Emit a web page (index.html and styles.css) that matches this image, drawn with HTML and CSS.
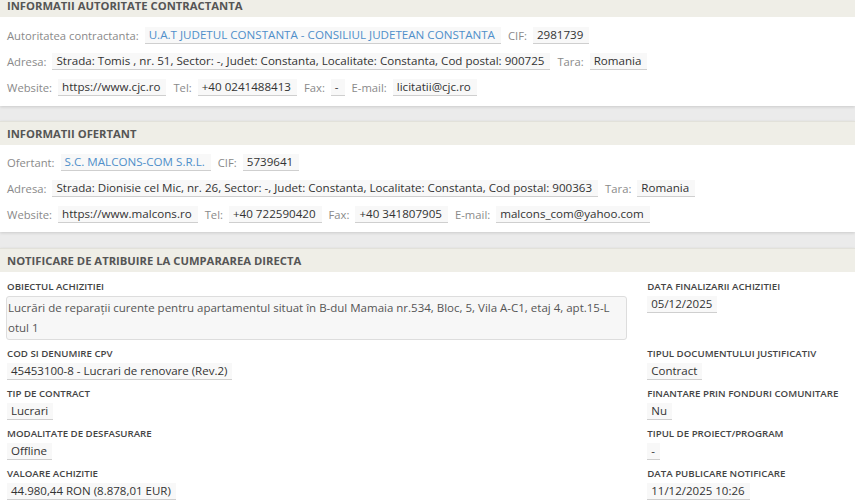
FILE: index.html
```html
<!DOCTYPE html>
<html lang="ro">
<head>
<meta charset="utf-8">
<title>Notificare de atribuire</title>
<link rel="stylesheet" href="styles.css">
</head>
<body>
<section class="panel first">
  <div class="panel-head">INFORMATII AUTORITATE CONTRACTANTA</div>
  <div class="panel-body">
    <div class="line"><span class="lbl">Autoritatea contractanta:</span><span class="val link">U.A.T JUDETUL CONSTANTA - CONSILIUL JUDETEAN CONSTANTA</span><span class="lbl">CIF:</span><span class="val">2981739</span></div>
    <div class="line"><span class="lbl">Adresa:</span><span class="val">Strada: Tomis , nr. 51, Sector: -, Judet: Constanta, Localitate: Constanta, Cod postal: 900725</span><span class="lbl">Tara:</span><span class="val">Romania</span></div>
    <div class="line"><span class="lbl">Website:</span><span class="val">https://www.cjc.ro</span><span class="lbl">Tel:</span><span class="val">+40 0241488413</span><span class="lbl">Fax:</span><span class="val">-</span><span class="lbl">E-mail:</span><span class="val">licitatii@cjc.ro</span></div>
  </div>
</section>
<section class="panel second">
  <div class="panel-head">INFORMATII OFERTANT</div>
  <div class="panel-body">
    <div class="line"><span class="lbl">Ofertant:</span><span class="val link">S.C. MALCONS-COM S.R.L.</span><span class="lbl">CIF:</span><span class="val">5739641</span></div>
    <div class="line"><span class="lbl">Adresa:</span><span class="val">Strada: Dionisie cel Mic, nr. 26, Sector: -, Judet: Constanta, Localitate: Constanta, Cod postal: 900363</span><span class="lbl">Tara:</span><span class="val">Romania</span></div>
    <div class="line"><span class="lbl">Website:</span><span class="val">https://www.malcons.ro</span><span class="lbl">Tel:</span><span class="val">+40 722590420</span><span class="lbl">Fax:</span><span class="val">+40 341807905</span><span class="lbl">E-mail:</span><span class="val">malcons_com@yahoo.com</span></div>
  </div>
</section>
<section class="panel last">
  <div class="panel-head">NOTIFICARE DE ATRIBUIRE LA CUMPARAREA DIRECTA</div>
  <div class="panel-body grid">
    <div class="field left">
      <div class="flabel">OBIECTUL ACHIZITIEI</div>
      <div class="textbox">Lucrări de reparații curente pentru apartamentul situat în B-dul Mamaia nr.534, Bloc, 5, Vila A-C1, etaj 4, apt.15-Lotul 1</div>
    </div>
    <div class="field right">
      <div class="flabel">DATA FINALIZARII ACHIZITIEI</div>
      <div class="frow"><span class="fval">05/12/2025</span></div>
    </div>
    <div class="field left">
      <div class="flabel">COD SI DENUMIRE CPV</div>
      <div class="frow"><span class="fval">45453100-8 - Lucrari de renovare (Rev.2)</span></div>
    </div>
    <div class="field right">
      <div class="flabel">TIPUL DOCUMENTULUI JUSTIFICATIV</div>
      <div class="frow"><span class="fval">Contract</span></div>
    </div>
    <div class="field left">
      <div class="flabel">TIP DE CONTRACT</div>
      <div class="frow"><span class="fval">Lucrari</span></div>
    </div>
    <div class="field right">
      <div class="flabel">FINANTARE PRIN FONDURI COMUNITARE</div>
      <div class="frow"><span class="fval">Nu</span></div>
    </div>
    <div class="field left">
      <div class="flabel">MODALITATE DE DESFASURARE</div>
      <div class="frow"><span class="fval">Offline</span></div>
    </div>
    <div class="field right">
      <div class="flabel">TIPUL DE PROIECT/PROGRAM</div>
      <div class="frow"><span class="fval">-</span></div>
    </div>
    <div class="field left">
      <div class="flabel">VALOARE ACHIZITIE</div>
      <div class="frow"><span class="fval">44.980,44 RON (8.878,01 EUR)</span></div>
    </div>
    <div class="field right">
      <div class="flabel">DATA PUBLICARE NOTIFICARE</div>
      <div class="frow"><span class="fval">11/12/2025 10:26</span></div>
    </div>
  </div>
</section>
</body>
</html>
```
FILE: styles.css
```css
html, body {
  margin: 0;
  padding: 0;
  background: #ebebeb;
  font-family: "Open Sans", "Liberation Sans", sans-serif;
  color: #333;
  overflow: hidden;
}

.panel {
  background: #fff;
  margin-bottom: 15px;
  box-shadow: 0 1px 3px rgba(0, 0, 0, 0.14);
}

.panel.first {
  margin-top: -7px;
}

.panel.second {
  margin-bottom: 16px;
}

.panel.last {
  margin-bottom: 0;
}

.panel-head {
  background: #efeee7;
  border-top: 1px solid #e2e1da;
  height: 23px;
  line-height: 23px;
  padding: 0 7px;
  font-size: 11.25px;
  font-weight: 700;
  color: #555;
}

.panel-body {
  padding: 10px 7px 10px 7px;
}

.second .panel-body {
  padding: 9px 7px 9px 7px;
}

.line {
  display: flex;
  align-items: center;
  gap: 6px;
  margin-bottom: 9px;
  line-height: 16px;
}

.line:last-child {
  margin-bottom: 0;
}

.lbl {
  color: #8a8a8a;
  font-size: 11.25px;
}

.val {
  background: #f8f8f8;
  border-bottom: 1px solid #cfcfcf;
  padding: 0 6px 0 4px;
  color: #333;
  font-size: 11.6px;
  margin-right: 1px;
}

.val.link {
  color: #4f8fca;
}

.grid {
  display: grid;
  grid-template-columns: 75% 25%;
  padding: 8px 0 0 0;
}

.field {
  margin-bottom: 7px;
}

.field.left {
  padding-left: 7px;
}

.field.right {
  padding-left: 6px;
}

.flabel {
  font-size: 9.7px;
  line-height: 14px;
  font-weight: 600;
  color: #444;
  margin-bottom: 2px;
}

.frow {
  display: flex;
}

.fval {
  background: #f8f8f8;
  border-bottom: 1px solid #cfcfcf;
  padding: 0 5px 0 4px;
  font-size: 11.5px;
  line-height: 16px;
  color: #333;
}

.textbox {
  width: 606px;
  margin-left: -1px;
  background: #f7f7f7;
  border: 1px solid #ddd;
  border-radius: 3px;
  padding: 1px 12px 1px 1px;
  font-size: 11.5px;
  line-height: 20px;
  color: #555;
  word-break: break-all;
}
```
